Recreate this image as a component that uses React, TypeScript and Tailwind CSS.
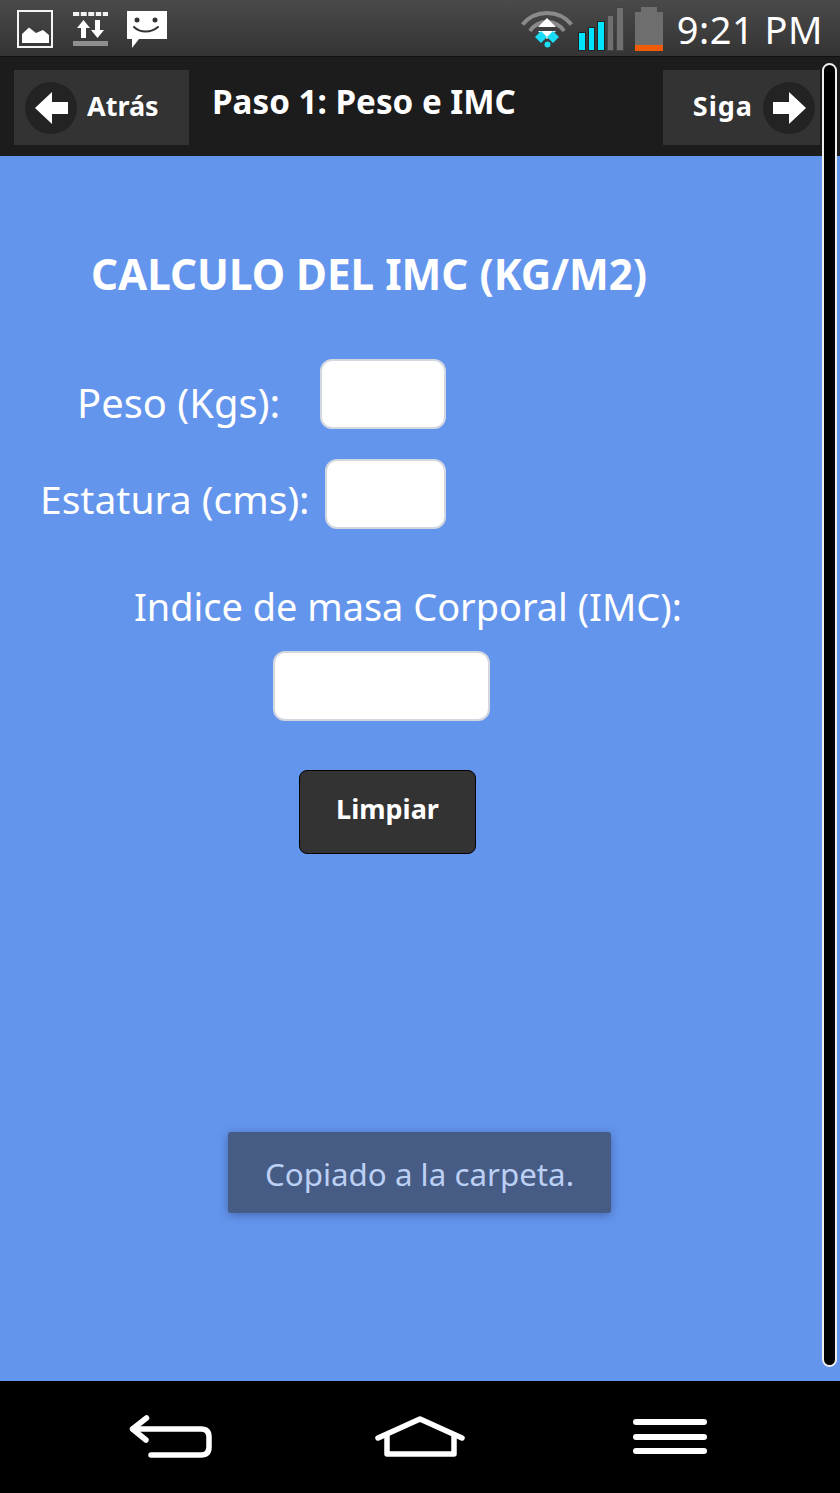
const FONT = "font-['Noto_Sans','Open_Sans',sans-serif]";

// ---------------------------------------------------------------------------
// Status bar icons
// ---------------------------------------------------------------------------
function PictureIcon() {
  return (
    <svg width="36" height="38" viewBox="0 0 36 38">
      <rect x="1" y="1" width="34" height="36" fill="none" stroke="#f4f4f4" strokeWidth="2" />
      <path d="M5 33V24L12 17.500L19 23L26 20L32 25V33Z" fill="#fff" />
    </svg>
  );
}

function TransferIcon() {
  return (
    <svg width="36" height="36" viewBox="0 0 36 36">
      <path d="M0 1H35V5H0Z" fill="#f2f2f2" />
      <path d="M7 1V5M14.500 1V5M22 1V5M29 1V5" stroke="#3c3c3c" strokeWidth="1.500" />
      <path d="M10.500 9L17 17H13V27H8V17H4Z" fill="#fff" />
      <path d="M24.500 27L31 19H27V9H22V19H18Z" fill="#fff" />
      <rect x="0" y="30" width="35" height="5" fill="#8f8f8f" />
    </svg>
  );
}

function SmileIcon() {
  return (
    <svg width="41" height="37" viewBox="0 0 41 37">
      <path d="M1 0H41V28H13L6 37V28H1Z" fill="#fff" />
      <circle cx="11" cy="9" r="2.500" fill="#333" />
      <circle cx="29" cy="9" r="2.500" fill="#333" />
      <path d="M8 16C14 22 25 22 32 16" fill="none" stroke="#333" strokeWidth="2" strokeLinecap="round" />
    </svg>
  );
}

function WifiIcon() {
  return (
    <svg width="52" height="38" viewBox="0 0 52 38">
      <path d="M1.500 14.500C14 -1 38 -1 50.500 14.500" fill="none" stroke="#8a8a8a" strokeWidth="4" />
      <path d="M9 21C17 9 35 9 43 21" fill="none" stroke="#8a8a8a" strokeWidth="4" />
      <path d="M26 8L35 17H17Z" fill="#fff" />
      <path d="M26 29L17 21H35Z" fill="#fff" />
      <path d="M14 27L20 21L26 27L20 33Z" fill="#19dcf5" />
      <path d="M26 27L32 21L38 27L32 33Z" fill="#19dcf5" />
      <circle cx="26.500" cy="34.500" r="3" fill="#19dcf5" />
    </svg>
  );
}

function SignalIcon() {
  const bars = [
    { h: 19, on: true },
    { h: 24, on: true },
    { h: 30, on: true },
    { h: 36, on: false },
    { h: 44, on: false },
  ];
  return (
    <div className="flex items-end gap-[2px] h-[44px]">
      {bars.map((b, i) => (
        <div
          key={i}
          className={b.on ? "w-[7.5px] bg-[#00e5ff] border border-[#222]" : "w-[7.5px] bg-[#6f6f6f] border border-[#444]"}
          style={{ height: b.h }}
        />
      ))}
    </div>
  );
}

function BatteryIcon() {
  return (
    <div className="flex flex-col items-center h-[44px]">
      <div className="w-[16px] h-[5px] bg-[#6e6e6e]" />
      <div className="flex flex-col justify-end w-[28px] flex-1 bg-[#6e6e6e]">
        <div className="h-[6px] bg-[#f25c05]" />
      </div>
    </div>
  );
}

function ArrowCircle({ right }: { right?: boolean }) {
  return (
    <div className="flex items-center justify-center w-[52px] h-[52px] rounded-full bg-[#232323]">
      <svg width="33" height="32" viewBox="0 0 33 32" className={right ? "rotate-180" : ""}>
        <path d="M0 16L17 0V10H33V22H17V32Z" fill="#fff" />
      </svg>
    </div>
  );
}

// ---------------------------------------------------------------------------
// Form input mock
// ---------------------------------------------------------------------------
function Box({ className }: { className: string }) {
  return <div className={`shrink-0 h-[70px] bg-white rounded-[12px] border-2 border-[#d3d7e0] ${className}`} />;
}

export default function App() {
  return (
    <div className={`relative flex flex-col w-[840px] h-[1493px] overflow-hidden text-white ${FONT}`}>
      {/* ステータスバー */}
      <div className="flex items-center justify-between h-[57px] pt-[2px] pl-[17px] pr-[17px] bg-gradient-to-b from-[#4a4a4a] to-[#343434] border-b border-[#111]">
        <div className="flex items-center gap-[20px]">
          <PictureIcon />
          <TransferIcon />
          <div className="-ml-[3px]">
            <SmileIcon />
          </div>
        </div>
        <div className="flex items-center">
          <WifiIcon />
          <div className="ml-[5px]">
            <SignalIcon />
          </div>
          <div className="ml-[11px]">
            <BatteryIcon />
          </div>
          <span className="ml-[14px] text-[38px] leading-none tracking-[0.5px]">9:21 PM</span>
        </div>
      </div>

      {/* ヘッダー */}
      <div className="flex items-start justify-between h-[99px] pt-[13px] pl-[14px] pr-[20px] bg-[#1c1c1c]">
        <div className="flex items-center w-[175px] h-[75px] pl-[11px] gap-[10px] bg-[#333]">
          <ArrowCircle />
          <span className="text-[27px] font-bold -mt-[2px]">Atrás</span>
        </div>
        <h1 className="flex-1 ml-[23px] mt-[10px] text-[33.2px] leading-[44px] font-bold">Paso 1: Peso e IMC</h1>
        <div className="flex items-center justify-end w-[157px] h-[75px] pr-[5px] gap-[10px] bg-[#333]">
          <span className="text-[27px] font-bold -mt-[2px] tracking-[1px]">Siga</span>
          <ArrowCircle right />
        </div>
      </div>

      {/* 本文 */}
      <div className="flex flex-col flex-1 bg-[#6495ed]">
        <h2 className="mt-[91px] ml-[91px] text-[42.2px] leading-[54px] font-bold whitespace-nowrap">CALCULO DEL IMC (KG/M2)</h2>
        <div className="flex items-center mt-[58px] h-[70px] pl-[77px]">
          <span className="w-[243px] pt-[18px] text-[39.9px] leading-[54px]">Peso (Kgs):</span>
          <Box className="w-[126px]" />
        </div>
        <div className="flex items-center mt-[30px] h-[70px] pl-[40px]">
          <span className="w-[285px] pt-[10px] text-[39px] leading-[54px] whitespace-nowrap">Estatura (cms):</span>
          <Box className="w-[121px]" />
        </div>
        <p className="mt-[50px] ml-[134px] text-[37.9px] leading-[54px] whitespace-nowrap">Indice de masa Corporal (IMC):</p>
        <Box className="mt-[18px] ml-[273px] w-[217px]" />
        <button className="flex items-center justify-center mt-[49px] ml-[299px] w-[177px] h-[84px] pb-[5px] bg-[#333] border border-black rounded-[8px] text-[27px] font-bold">
          Limpiar
        </button>
      </div>

      {/* ナビゲーション */}
      <div className="flex items-center justify-center h-[112px] bg-black">
        <svg width="600" height="60" viewBox="0 0 600 60" className="mt-[12px]">
          <g fill="none" stroke="#fff" strokeWidth="5.500" strokeLinecap="round" strokeLinejoin="round">
            <path d="M26.500 5L12.500 16L26 27" />
            <path d="M13 16H81Q89 16 89 24V34Q89 42 81 42H31" />
            <path d="M258 25L300 6L342 25" />
            <path d="M267 22V41H334V22" />
          </g>
          <g fill="#fff">
            <rect x="513" y="6" width="74" height="6" rx="3" />
            <rect x="513" y="21" width="74" height="6" rx="3" />
            <rect x="513" y="35" width="74" height="6" rx="3" />
          </g>
        </svg>
      </div>

      {/* スクロールバー */}
      <div className="absolute left-[822px] top-[63px] w-[15px] h-[1304px] bg-black border-2 border-[#eee] rounded-full" />

      {/* トースト */}
      <div className="absolute left-[228px] top-[1132px] flex items-center w-[383px] h-[81px] pl-[37px] pt-[3px] bg-[#465c85] rounded-[3px] shadow-[0_2px_10px_rgba(30,50,100,0.45)] text-[#bcd0f5] text-[31.3px] whitespace-nowrap">
        Copiado a la carpeta.
      </div>
    </div>
  );
}
